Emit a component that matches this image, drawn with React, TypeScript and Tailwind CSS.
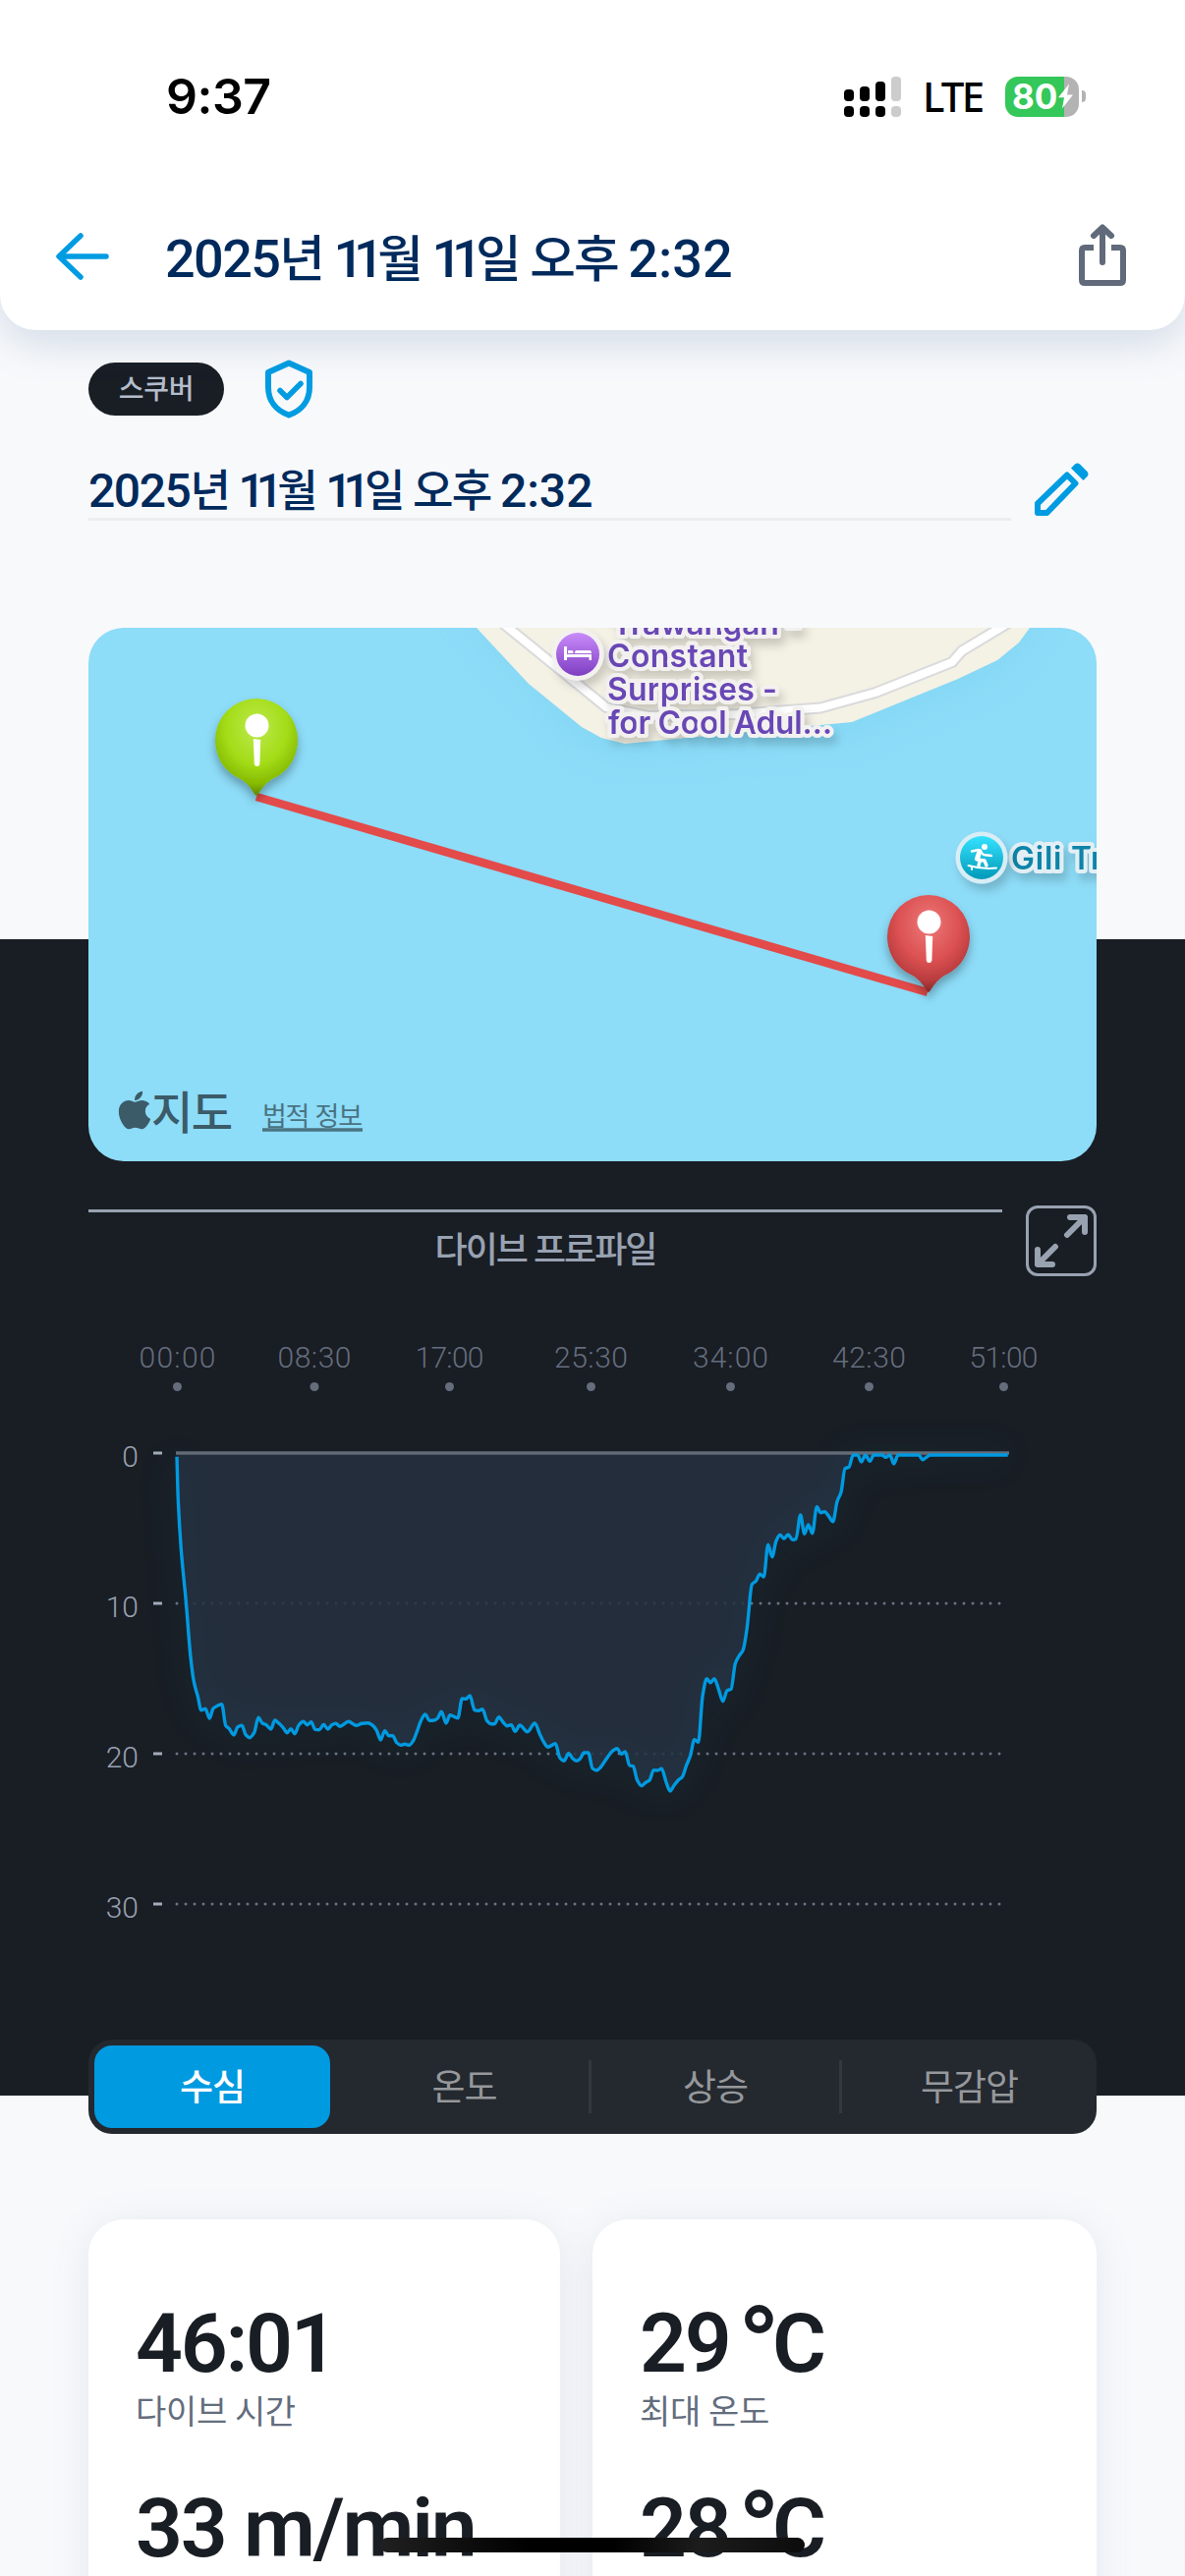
import React from "react";
import { FaApple } from "react-icons/fa";

interface Point {
  x: number;
  y: number;
}

const FONT = "Roboto, 'Noto Sans CJK KR', sans-serif";

// Depth samples as [x, y] offsets from the plot origin, 15.3 units per metre
const samples: [number, number][] = [
  [0, 3.7], [1.3, 47.7], [4.3, 97.7], [9.3, 151], [14, 207.7], [17.3, 232.7], [21.3, 247.7], [24.7, 261.7],
  [29, 260.3], [33.3, 270], [37, 260], [41.3, 257.3], [45.7, 255.7], [49.7, 277.3], [53.3, 280.7], [58, 287],
  [62, 278.7], [66.3, 277.3], [70, 286.7], [74, 289.7], [78.7, 284.7], [83, 269.3], [87, 275], [91, 276.7],
  [95.7, 281], [99.7, 272], [103.7, 275], [108, 279.3], [112.3, 284.7], [116, 280.7], [120, 285.7], [124, 277],
  [128.7, 273.3], [132.7, 276.7], [136.7, 273.7], [140.7, 281.3], [145, 281.7], [149.3, 276.3], [153.7, 281],
  [157.7, 276.7], [161.7, 275.3], [166, 278.3], [174.7, 273.3], [182.7, 277.3], [188.3, 275.3], [194.3, 274.7],
  [199, 277], [203.3, 282.3], [207.3, 292], [211.7, 282.7], [215.7, 287.7], [219.7, 287.7], [223.7, 294.7],
  [227.7, 297.3], [232, 296.3], [236.3, 297.3], [240.3, 293.3], [244.3, 283.7], [248.3, 272.7], [252.7, 266],
  [257.3, 272.3], [261.7, 272], [265.3, 270], [269.3, 263.3], [274, 275], [278, 266.7], [286, 269.7],
  [290.3, 250], [294.3, 250.3], [298.3, 247], [303, 261.7], [307, 262.3], [311, 260.7], [315.7, 272.7],
  [319.7, 275.7], [323.3, 275.7], [327.7, 268.7], [332, 274], [336, 277.7], [340.3, 276.7], [344.3, 283.3],
  [349, 277], [356.7, 283.7], [364.3, 275], [369.3, 286], [373.3, 294], [377.7, 299.3], [385.3, 295.7],
  [389.7, 310], [394, 313.3], [398.7, 305.7], [403, 311], [406.7, 313.3], [410.3, 311.3], [414.3, 305],
  [418.7, 305], [423, 321], [427.3, 323], [431.3, 319.7], [436, 313], [443.3, 303.3], [448, 300.7],
  [452.3, 306.3], [456.3, 304], [460.7, 318], [464.3, 318.7], [468.7, 333.3], [473, 338.7], [477, 335.3],
  [481, 333], [485.3, 322.7], [489.3, 323], [493.3, 321.3], [498, 335], [502, 344], [506, 338.3], [510.3, 333],
  [514.3, 329.7], [518.7, 317.7], [522.7, 307.7], [526.7, 291.7], [530.7, 294.3], [535, 247.7], [539.3, 229.7],
  [543, 233.7], [547, 229.7], [551.3, 240.3], [555.7, 252.7], [560, 241.7], [564, 240.3], [568.3, 214.3],
  [572.3, 206.3], [576.3, 200.3], [580.3, 177.7], [585.3, 133.7], [589.3, 130.3], [593.3, 123.3], [597.3, 126],
  [601.7, 93.3], [605.7, 105.7], [610, 89.3], [614, 83.3], [618, 87], [622, 83], [626.7, 88.3], [630, 87.7],
  [634.7, 63], [638.7, 82.3], [642.7, 73], [646.7, 81.7], [651.3, 54.7], [655.3, 60.7], [659.3, 59.7],
  [663.7, 64.7], [667.7, 69.7], [672, 49.3], [676, 39.7], [680, 15.7], [684, 14.3], [688.3, 2], [692.7, 2],
  [696.7, 9], [700.7, 2], [705.3, 8.3], [709.3, 2], [717.7, 2], [721.3, 4.3], [725.7, 2], [729.7, 11],
  [734, 2], [755, 2], [759, 6.7], [766.7, 2], [845.7, 2],
];

const timeTicks = [
  { label: "00:00", x: 90.5, width: 78 },
  { label: "08:30", x: 230, width: 75 },
  { label: "17:00", x: 367.5, width: 70 },
  { label: "25:30", x: 511.5, width: 75 },
  { label: "34:00", x: 653.5, width: 77 },
  { label: "42:30", x: 794.5, width: 75 },
  { label: "51:00", x: 931.5, width: 70 },
];

const depthTicks = [0, 10, 20, 30];

const tabs = [
  { label: "온도", className: "w-[256px] border-r-[3px]" },
  { label: "상승", className: "w-[255px] border-r-[3px]" },
  { label: "무감압", className: "w-[259px]" },
];

const signalBars = [
  { height: "h-[12px]", color: "bg-black" },
  { height: "h-[15px]", color: "bg-black" },
  { height: "h-[20px]", color: "bg-black" },
  { height: "h-[25px]", color: "bg-[#cccccc]" },
];

// Cubic interpolation that never overshoots between two samples
function smoothPath(points: Point[]): string {
  const slope = (a: Point, b: Point) => (b.y - a.y) / (b.x - a.x);
  const tangents = points.map((p, i) => {
    if (i === 0 || i === points.length - 1) return 0;
    const s0 = slope(points[i - 1], p);
    const s1 = slope(p, points[i + 1]);
    if (s0 * s1 <= 0) return 0;
    return (2 * s0 * s1) / (s0 + s1);
  });
  tangents[0] = slope(points[0], points[1]);

  let d = `M${points[0].x} ${points[0].y}`;
  for (let i = 1; i < points.length; i++) {
    const a = points[i - 1];
    const b = points[i];
    const h = (b.x - a.x) / 3;
    d += `C${(a.x + h).toFixed(2)} ${(a.y + h * tangents[i - 1]).toFixed(2)} ${(b.x - h).toFixed(2)} ${(b.y - h * tangents[i]).toFixed(2)} ${b.x} ${b.y}`;
  }
  return d;
}

const DateText: React.FC = () => (
  <>
    <span className="tracking-[-0.03em]">2025</span>
    <span className="text-[0.94em] tracking-[-0.04em]">년 </span>
    <span className="tracking-[-0.19em]">1</span>
    <span className="tracking-[-0.12em]">1</span>
    <span className="text-[0.94em] tracking-[-0.04em]">월 </span>
    <span className="tracking-[-0.19em]">1</span>
    <span className="tracking-[-0.12em]">1</span>
    <span className="text-[0.94em] tracking-[-0.04em]">일 오후 </span>
    <span>2:32</span>
  </>
);

const StatusBar: React.FC = () => (
  <div className="flex h-[196px] items-center justify-between pr-[101px] pl-[169px] text-black">
    <span className="font-[Inter] text-[50px] font-semibold tracking-[-0.01em]">9:37</span>
    <div className="flex items-center">
      <div className="flex items-end gap-1.5">
        {signalBars.map((bar, i) => (
          <div key={i} className="flex flex-col gap-[5px]">
            <div className={`w-2.5 rounded-[4px] ${bar.height} ${bar.color}`} />
            <div className={`h-[11px] w-2.5 rounded-[4px] ${bar.color}`} />
          </div>
        ))}
      </div>
      <span className="ml-[22px] w-[62px] font-['Noto_Sans'] text-[42px] leading-none font-medium tracking-[-0.065em]">
        LTE
      </span>
      <div className="ml-[22px] flex h-[41px] w-[75px] items-center rounded-[13px] bg-[linear-gradient(90deg,#34c759_60px,#b3b3b3_60px)] pl-[7px]">
        <span className="font-[Inter] text-[35px] leading-none font-bold text-white">80</span>
        <svg viewBox="0 0 17 26" className="h-[26px] w-[17px] shrink-0">
          <path d="M12 0.5L1 14.2H7L5 25.5L16 11.5H10Z" fill="#fff" />
        </svg>
      </div>
      <div className="ml-[3px] h-3 w-1 rounded-r-full bg-[#b3b3b3]" />
    </div>
  </div>
);

const Header: React.FC = () => (
  <header className="relative h-[336px] rounded-b-[36px] bg-white shadow-[0_14px_40px_rgba(70,110,160,0.2)]">
    <StatusBar />
    <div className="flex h-[130px] items-center pr-[60px] pl-[57px]">
      <svg viewBox="0 0 54 48" className="h-12 w-[54px]" fill="none" stroke="#009ce2" strokeWidth="5.5" strokeLinecap="round" strokeLinejoin="round">
        <path d="M25 3L3 24L25 45M4 24H51" />
      </svg>
      <h1 className="ml-[57px] flex-1 pt-1.5 text-[54px] leading-[70px] font-medium whitespace-pre text-[#002a5c]">
        <DateText />
      </h1>
      <svg viewBox="0 0 48 63" className="mb-[3px] h-[63px] w-12" fill="none" stroke="#606a7a" strokeWidth="6">
        <path d="M15 24H6Q3 24 3 27V57Q3 60 6 60H42Q45 60 45 57V27Q45 24 42 24H33" />
        <path d="M24 39V4M15 12L24 3.5L33 12" strokeLinecap="round" strokeLinejoin="round" />
      </svg>
    </div>
  </header>
);

const MapPin: React.FC<{ x: number; y: number; fill: string }> = ({ x, y, fill }) => (
  <g transform={`translate(${x} ${y})`}>
    <path
      d="M0 57C-2 57-5 47-16 40C-32 33-42 18-42 0A42 42 0 0 1 42 0C42 18 32 33 16 40C5 47 2 57 0 57Z"
      fill={fill}
      filter="url(#pin-shadow)"
    />
    <circle cx="0.5" cy="-14.5" r="12" fill="#fff" />
    <path d="M-3.2-1L4.2 0L3.4 24.5Q3 27 0.5 27Q-2 27-2.2 24.5Z" fill="#fff" />
  </g>
);

const DiveMap: React.FC = () => (
  <div className="h-[543px] overflow-hidden rounded-[36px] bg-[#8ddcf8]">
    <svg viewBox="0 0 1026 543" className="h-[543px] w-[1026px]" fontFamily="Inter, 'Noto Sans CJK KR', sans-serif">
      <defs>
        <radialGradient id="pin-green" cx="0.5" cy="0.3" r="0.68">
          <stop offset="0" stopColor="#bbea4c" />
          <stop offset="0.55" stopColor="#a4dc18" />
          <stop offset="0.85" stopColor="#86bb00" />
          <stop offset="1" stopColor="#648c02" />
        </radialGradient>
        <radialGradient id="pin-red" cx="0.5" cy="0.3" r="0.68">
          <stop offset="0" stopColor="#ed7878" />
          <stop offset="0.55" stopColor="#dc5152" />
          <stop offset="0.85" stopColor="#b93c3e" />
          <stop offset="1" stopColor="#8c2c2d" />
        </radialGradient>
        <linearGradient id="poi-hotel" x2="0" y2="1">
          <stop offset="0" stopColor="#c98bfa" />
          <stop offset="1" stopColor="#7e3ec2" />
        </linearGradient>
        <linearGradient id="poi-surf" x2="0" y2="1">
          <stop offset="0" stopColor="#35e3ff" />
          <stop offset="1" stopColor="#0199b8" />
        </linearGradient>
        <filter id="pin-shadow" x="-30%" y="-30%" width="160%" height="160%">
          <feDropShadow dx="0" dy="6" stdDeviation="5" floodColor="#000" floodOpacity="0.3" />
        </filter>
        <filter id="soft-shadow" x="-30%" y="-30%" width="160%" height="160%">
          <feDropShadow dx="4" dy="7" stdDeviation="5" floodColor="#000" floodOpacity="0.18" />
        </filter>
        <filter id="shore" x="-20%" y="-80%" width="140%" height="300%">
          <feGaussianBlur stdDeviation="16" />
        </filter>
      </defs>

      {/* Island and coast road */}
      <path d="M380 -20L502 115L546 130L777 108L925 44L975 -20Z" fill="#7dd2f2" opacity="0.5" filter="url(#shore)" />
      <path d="M395 0L448 57L502 101L522 112L546 118L598 113L777 96L885 52L925 33L947 15L958 0Z" fill="#f4f1e5" />
      <g fill="none" strokeLinejoin="round">
        <path d="M420 -6L527 81L570 90L660 88L745 81.5L801 66L879 35L889 23.5L938 -6" stroke="#d9dadb" strokeWidth="12" />
        <path d="M420 -6L527 81L570 90L660 88L745 81.5L801 66L879 35L889 23.5L938 -6" stroke="#fff" strokeWidth="8" />
      </g>

      {/* Points of interest */}
      <g fontSize="32" fontWeight="600" strokeLinejoin="round" strokeWidth="8">
        <g fill="#6847b5" stroke="#f3f1f0" className="[paint-order:stroke]" filter="url(#soft-shadow)">
          <text x="529" y="107.5" textLength="228">for Cool Adul…</text>
          <text x="528" y="73.5" textLength="173">Surprises -</text>
          <text x="528" y="39.5" textLength="143">Constant</text>
          <text x="533" y="6.5" textLength="192">Trawangan -</text>
        </g>
        <g fill="#0c84a9" stroke="#e3eff4" className="[paint-order:stroke]" filter="url(#soft-shadow)">
          <text x="939" y="246" textLength="240">Gili Trawangan</text>
        </g>
      </g>
      <circle cx="498" cy="27" r="26.5" fill="#f3f1f0" filter="url(#soft-shadow)" />
      <circle cx="498" cy="27" r="22" fill="url(#poi-hotel)" />
      <g fill="#fff">
        <path d="M484 19H487V27H512V33H509.5V30H487V33H484Z" />
        <path d="M488 23H492Q493.500 23 493.500 26H488ZM495 25Q495 23 497 23H510Q512 23 512 26H495Z" />
      </g>
      <circle cx="909" cy="234" r="26.5" fill="#d9edf5" filter="url(#soft-shadow)" />
      <circle cx="909" cy="234" r="22" fill="url(#poi-surf)" />
      <circle cx="912" cy="223" r="3" fill="#fff" />
      <g fill="none" stroke="#fff" strokeLinecap="round" strokeLinejoin="round">
        <path d="M899 227.500L906 226L911 231L919 232" strokeWidth="2.4" />
        <path d="M907 227.500L904.500 235" strokeWidth="5" />
        <path d="M905 236L912 237L914 242M907 238L906 242" strokeWidth="3.4" />
        <path d="M895.500 242Q910 246 924 244.500M899 243V246" strokeWidth="2" />
      </g>

      {/* Drift track */}
      <path d="M171 172L854 371" stroke="#e34b4a" strokeWidth="8.500" />
      <MapPin x={171} y={114} fill="url(#pin-green)" />
      <MapPin x={855} y={314} fill="url(#pin-red)" />

      <FaApple x="25" y="469" size={44} color="#3b5b68" />
      <text x="64" y="510" fontSize="46" fontWeight="500" fill="#3b5b68" textLength="83">
        지도
      </text>
      <text x="177" y="506.500" fontSize="27" fill="#4a7382" textLength="102">
        법적 정보
      </text>
      <path d="M177 511H279" stroke="#4a7382" strokeWidth="3.500" />
    </svg>
  </div>
);

const DepthChart: React.FC = () => {
  const line = smoothPath(samples.map(([x, y]) => ({ x, y })));

  return (
    <svg viewBox="0 0 1026 777" className="h-[777px] w-[1026px]" fontFamily={FONT} fontWeight="300">
      <defs>
        <filter id="line-glow" x="-10%" y="-20%" width="120%" height="140%">
          <feGaussianBlur stdDeviation="16" />
        </filter>
      </defs>

      {timeTicks.map((tick) => (
        <g key={tick.label} fill="#656d7d">
          <text x={tick.x - tick.width / 2} y="93" fontSize="30" textLength={tick.width}>
            {tick.label}
          </text>
          <circle cx={tick.x} cy="112.500" r="4.500" />
        </g>
      ))}

      {depthTicks.map((depth) => (
        <g key={depth} transform={`translate(0 ${180 + depth * 15.3})`}>
          <text x="51" y="14" fontSize="30" textAnchor="end" fill="#98a1b0">
            {depth}
          </text>
          <path d="M66 0H75" stroke="#a3acba" strokeWidth="3" />
          {depth > 0 && (
            <path d="M90 0H928" stroke="#6b7382" strokeWidth="3" strokeLinecap="round" strokeDasharray="0 9" />
          )}
        </g>
      ))}

      <g transform="translate(90 180)">
        <path d={`${line}V2H0Z`} fill="#27303f" fillOpacity="0.85" />
        <path d={line} fill="none" stroke="#0c6e8c" strokeWidth="24" opacity="0.07" filter="url(#line-glow)" />
        <path d="M-1 0H847" stroke="#626b78" strokeWidth="3.500" />
        <path d={line} fill="none" stroke="#009ae1" strokeWidth="3.400" strokeLinejoin="round" />
      </g>
    </svg>
  );
};

const Stat: React.FC<{ children: React.ReactNode; label?: string }> = ({ children, label }) => (
  <div>
    <div className="h-[90px] text-[84px] leading-[92px] font-semibold tracking-[-0.027em] whitespace-pre text-[#191d24]">
      {children}
    </div>
    {label && <div className="h-[50px] text-[34px] leading-[50px] tracking-[-0.01em] text-[#636d7d]">{label}</div>}
  </div>
);

const Degrees: React.FC = () => (
  <span className="-ml-2.5 align-[-12px] text-[112px] leading-[0] font-medium tracking-[-0.07em]">°</span>
);

export default function App() {
  return (
    <div
      className="relative h-[2622px] w-[1206px] overflow-hidden bg-[#f8f9fb]"
      style={{ fontFamily: FONT }}
    >
      <Header />

      {/* Dive name */}
      <section className="px-[90px] pt-[30px]">
        <div className="flex items-center gap-[42px]">
          <span className="flex h-[54px] w-[138px] items-center justify-center rounded-full bg-[#191d24] pt-0.5 text-[28px] font-medium tracking-[-0.01em] text-[#b4bccb]">
            스쿠버
          </span>
          <svg viewBox="0 0 48 60" className="h-[60px] w-12" fill="none" stroke="#009ce2" strokeWidth="6" strokeLinejoin="round">
            <path d="M24 3.500L45 13V28C45 42 37 52 24 56.500C11 52 3 42 3 28V13Z" />
            <path d="M15 31.500L22 38.500L36 24.500" strokeLinecap="round" strokeWidth="5.500" />
          </svg>
        </div>
        <div className="mt-[45px] flex items-start gap-6">
          <h2 className="h-[59px] w-[939px] border-b-[3px] border-[#ebedee] text-[48px] leading-[57px] font-medium whitespace-pre text-[#002a5c]">
            <DateText />
          </h2>
          <svg viewBox="0 0 55 54" className="h-[54px] w-[55px]" fill="none">
            <path d="M3 51V41.500L33 12.500L41.500 21L12.500 51Z" stroke="#009ce2" strokeWidth="6" strokeLinejoin="round" />
            <path d="M37 5.500L41 1.500Q43.500 -0.500 46 1.500L53.500 9Q55.500 11.500 53.500 14L49.500 18Z" fill="#009ce2" />
          </svg>
        </div>
      </section>

      {/* Map, depth profile and its tabs sit on a dark band */}
      <section className="mt-[109px] bg-[linear-gradient(#f8f9fb_317px,#191d24_317px,#191d24_1494px,#f8f9fb_1494px)] px-[90px]">
        <DiveMap />

        <div className="mt-[45px] flex items-start gap-6">
          <div className="mt-1 h-[68px] w-[930px] border-t-[3px] border-[#98a2b1] pt-[7px] text-center text-[36px] leading-[64px] font-medium tracking-[-0.055em] text-[#98a2b1]">
            다이브 프로파일
          </div>
          <div className="flex h-[72px] w-[72px] items-center justify-center rounded-xl border-[3px] border-[#98a2b1]">
            <svg viewBox="0 0 54 54" className="h-[54px] w-[54px]" fill="none" stroke="#98a2b1" strokeWidth="6" strokeLinecap="round" strokeLinejoin="round">
              <path d="M33 21L51 3M36 3H51V18M21 33L3 51M3 36V51H18" />
            </svg>
          </div>
        </div>

        <DepthChart />

        <div className="flex h-24 items-center rounded-3xl bg-[#24282f] text-[37px] tracking-[-0.03em]">
          <div className="mr-2.5 ml-1.5 flex h-[84px] w-60 items-center justify-center rounded-[18px] bg-[#009ae0] pt-1 font-medium text-white">
            수심
          </div>
          {tabs.map((tab) => (
            <div
              key={tab.label}
              className={`flex h-[54px] items-center justify-center border-[#33373e] pt-1 text-[#96989b] ${tab.className}`}
            >
              {tab.label}
            </div>
          ))}
        </div>
      </section>

      {/* Dive stats */}
      <section className="mt-[87px] flex gap-[33px] px-[90px]">
        <div className="h-[480px] w-[480px] space-y-12 rounded-[36px] bg-white pt-[81px] pl-12 shadow-[0_6px_40px_rgba(70,110,160,0.12)]">
          <Stat label="다이브 시간">46:01</Stat>
          <Stat>33 m/min</Stat>
        </div>
        <div className="h-[480px] w-[513px] space-y-12 rounded-[36px] bg-white pt-[81px] pl-12 shadow-[0_6px_40px_rgba(70,110,160,0.12)]">
          <Stat label="최대 온도">
            29 <Degrees />C
          </Stat>
          <Stat>
            28 <Degrees />C
          </Stat>
        </div>
      </section>

      {/* Home indicator */}
      <div className="absolute bottom-6 left-[387px] h-[15px] w-[432px] rounded-full bg-[linear-gradient(90deg,#202020,#000_35%,#000_55%,#1c1c1c_75%,#0c0c0c)]" />
    </div>
  );
}
